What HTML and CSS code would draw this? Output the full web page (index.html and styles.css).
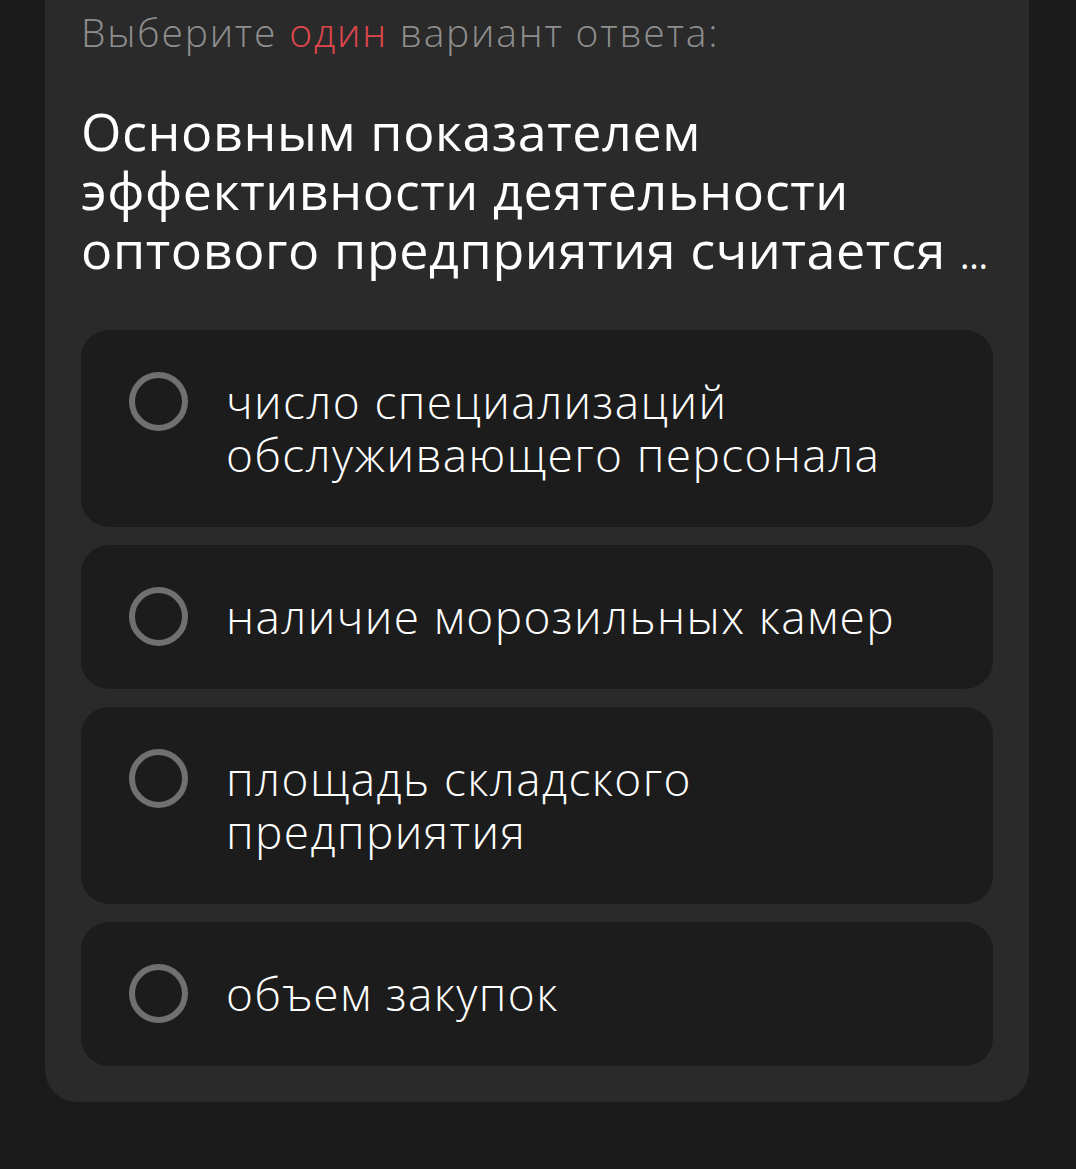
FILE: index.html
```html
<!DOCTYPE html>
<html lang="ru">
  <head>
    <meta charset="UTF-8" />
    <meta name="viewport" content="width=device-width, initial-scale=1.0" />
    <title>Тест</title>
    <link rel="stylesheet" href="styles.css">
  </head>
  <body>
    <div class="b-quiz">
      <p class="b-quiz__hint">Выберите <span class="b-quiz__hint-accent">один</span> вариант ответа:</p>
      <h1 class="b-quiz__question">Основным показателем эффективности деятельности оптового предприятия считается <span class="b-quiz__ellipsis">…</span></h1>

      <div class="b-options">
        <label class="b-option">
          <span class="b-option__radio"></span>
          <span class="b-option__text">число специализаций обслуживающего персонала</span>
        </label>
        <label class="b-option">
          <span class="b-option__radio"></span>
          <span class="b-option__text">наличие морозильных камер</span>
        </label>
        <label class="b-option">
          <span class="b-option__radio"></span>
          <span class="b-option__text">площадь складского предприятия</span>
        </label>
        <label class="b-option">
          <span class="b-option__radio"></span>
          <span class="b-option__text">объем закупок</span>
        </label>
      </div>
    </div>
  </body>
</html>
```

FILE: styles.css
```css
body
{
	margin: 0;
	background-color: #1b1b1b;
	font-family: "Open Sans", "Noto Sans", sans-serif;
}

.b-quiz
{
	width: 912px;
	margin-left: 45px;
	padding: 8px 36px 36px;
	background-color: #2a2a2a;
	border-radius: 0 0 32px 32px;
}

.b-quiz__hint
{
	margin: 0;
	font-size: 39px;
	font-weight: 300;
	letter-spacing: 1.8px;
	line-height: 48px;
	color: #8e8e8e;
}

.b-quiz__hint-accent
{
	color: #e0474c;
}

.b-quiz__question
{
	margin: 45px 0 0;
	font-size: 52px;
	font-weight: 400;
	letter-spacing: 0.6px;
	line-height: 59px;
	color: #ffffff;
}

.b-quiz__ellipsis
{
	font-size: 36px;
	letter-spacing: 0;
}

.b-options
{
	display: flex;
	flex-direction: column;
	gap: 18px;
	margin-top: 45px;
}

.b-option
{
	display: flex;
	align-items: flex-start;
	gap: 38px;
	padding: 45px 40px 46px 48px;
	background-color: #1c1c1c;
	border-radius: 28px;
	cursor: pointer;
}

.b-option__radio
{
	flex: none;
	width: 47px;
	height: 47px;
	margin: -3px 0 -6px;
	border: 6px solid #707070;
	border-radius: 50%;
}

.b-option__text
{
	font-size: 46px;
	font-weight: 300;
	letter-spacing: 1.4px;
	line-height: 53px;
	color: #ffffff;
}
```
